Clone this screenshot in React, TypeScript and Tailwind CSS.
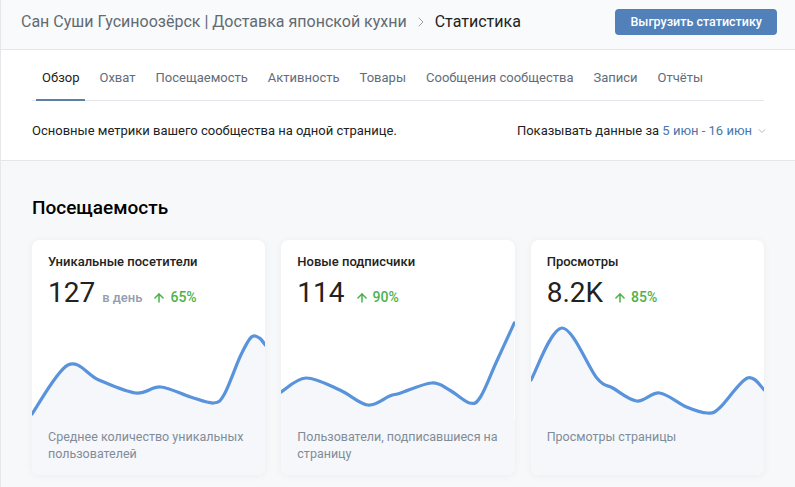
import { ArrowUp, ChevronDown, ChevronRight } from "lucide-react";

type Pt = [number, number];

const tabs = [
  "Обзор",
  "Охват",
  "Посещаемость",
  "Активность",
  "Товары",
  "Сообщения сообщества",
  "Записи",
  "Отчёты",
];

const cards: {
  title: string;
  value: string;
  unit?: string;
  delta: string;
  caption: string;
  points: Pt[];
}[] = [
  {
    title: "Уникальные посетители",
    value: "127",
    unit: "в день",
    delta: "65%",
    caption: "Среднее количество уникальных пользователей",
    points: [
      [0, 94], [36, 45], [67, 60], [104, 73], [129, 67], [159, 77],
      [182, 83], [193, 74], [209, 36], [220, 17], [228, 18], [234, 25],
    ],
  },
  {
    title: "Новые подписчики",
    value: "114",
    delta: "90%",
    caption: "Пользователи, подписавшиеся на страницу",
    points: [
      [0, 72], [25, 58], [59, 70], [87, 85], [109, 76], [120, 73],
      [151, 63], [169, 70], [189, 83], [200, 77], [216, 42], [234, 3],
    ],
  },
  {
    title: "Просмотры",
    value: "8.2K",
    delta: "85%",
    caption: "Просмотры страницы",
    points: [
      [0, 60], [31, 8], [66, 58], [82, 68], [106, 81], [129, 73],
      [156, 87], [177, 93], [189, 88], [217, 58], [234, 70],
    ],
  },
];

// catmull-rom through the points, written out as cubic beziers
function smooth(pts: Pt[]) {
  let d = `M${pts[0][0]},${pts[0][1]}`;
  for (let i = 0; i < pts.length - 1; i++) {
    const p0 = pts[i - 1] ?? pts[i];
    const p1 = pts[i];
    const p2 = pts[i + 1];
    const p3 = pts[i + 2] ?? p2;
    const c1x = p1[0] + (p2[0] - p0[0]) / 6;
    const c1y = p1[1] + (p2[1] - p0[1]) / 6;
    const c2x = p2[0] - (p3[0] - p1[0]) / 6;
    const c2y = p2[1] - (p3[1] - p1[1]) / 6;
    d += ` C${c1x},${c1y} ${c2x},${c2y} ${p2[0]},${p2[1]}`;
  }
  return d;
}

function Sparkline({ points }: { points: Pt[] }) {
  const line = smooth(points);
  const last = points[points.length - 1];
  const area = `${line} L${last[0]},100 L0,100 Z`;
  return (
    <svg
      viewBox="0 0 234 100"
      preserveAspectRatio="none"
      className="block h-[100px] w-full"
    >
      <path d={area} fill="#f5f7fa" />
      <path
        d={line}
        fill="none"
        stroke="#5893dc"
        strokeWidth={3.2}
        strokeLinecap="round"
        vectorEffect="non-scaling-stroke"
      />
    </svg>
  );
}

export default function App() {
  return (
    <div className="min-h-[487px] w-full border-l border-[#e5e7eb] bg-[#f7f8fa] font-['Roboto','Liberation_Sans',sans-serif]">
      <header className="flex h-[50px] items-center justify-between border-b border-[#e3e6ea] bg-[#f9fafb] pb-[5px] pl-[20px] pr-[18px]">
        <div className="flex items-center text-[16px] leading-5">
          <span className="text-[#626a73]">
            Сан Суши Гусиноозёрск | Доставка японской кухни
          </span>
          <ChevronRight size={16} strokeWidth={1.5} className="mx-[6px] text-[#99a2ad]" />
          <span className="text-[#222]">Статистика</span>
        </div>
        <button className="h-[26px] rounded-[4px] bg-[#5181b8] px-[15px] text-[12.5px] font-medium text-white">
          Выгрузить статистику
        </button>
      </header>

      <section className="border-b border-[#e3e6ea] bg-white px-[31px]">
        <nav className="flex gap-2 border-b border-[#e3e6ea] pl-1">
          {tabs.map((t, i) => (
            <div
              key={t}
              className={
                i === 0
                  ? "-mb-px h-[51px] border-b-2 border-[#5d7fa3] px-[6px] pt-[20px] text-[13px] leading-4 text-[#222]"
                  : "-mb-px h-[51px] px-[6px] pt-[20px] text-[13px] leading-4 text-[#626d7a]"
              }
            >
              {t}
            </div>
          ))}
        </nav>
        <div className="-mr-[4px] flex h-[59px] items-center justify-between text-[13px] text-[#222]">
          <span>Основные метрики вашего сообщества на одной странице.</span>
          <span className="flex items-center">
            Показывать данные за&nbsp;
            <span className="text-[#4a76a8]">5 июн - 16 июн</span>
            <ChevronDown size={12} strokeWidth={1.5} className="ml-[4px] text-[#99a2ad]" />
          </span>
        </div>
      </section>

      <section className="px-[31px] pb-4 pt-[35px]">
        <h2 className="text-[19px] font-medium leading-6 text-[#000]">
          Посещаемость
        </h2>
        <div className="mt-5 grid grid-cols-3 gap-4">
          {cards.map((c) => (
            <div
              key={c.title}
              className="flex h-[235px] flex-col overflow-hidden rounded-lg bg-white shadow-[0_1px_8px_rgba(0,0,0,0.05)]"
            >
              <div className="h-[80px] px-4 pt-[14px]">
                <div className="text-[13px] font-medium leading-4 text-[#222]">
                  {c.title}
                </div>
                <div className="mt-[7px] flex items-center">
                  <span className="text-[28px] leading-8 text-[#222]">{c.value}</span>
                  {c.unit && (
                    <span className="ml-[7px] pt-[9px] text-[13px] font-medium text-[#939cb0]">
                      {c.unit}
                    </span>
                  )}
                  <span className="ml-[10px] flex items-center pt-[9px] text-[14px] font-medium text-[#4bb34b]">
                    <ArrowUp size={14} strokeWidth={2.6} className="mr-[4px]" />
                    {c.delta}
                  </span>
                </div>
              </div>
              <Sparkline points={c.points} />
              <div className="flex-1 bg-[#f5f7fa] pl-4 pr-2 pt-[8px] text-[12.5px] leading-[17px] text-[#818c99]">
                {c.caption}
              </div>
            </div>
          ))}
        </div>
      </section>
    </div>
  );
}
